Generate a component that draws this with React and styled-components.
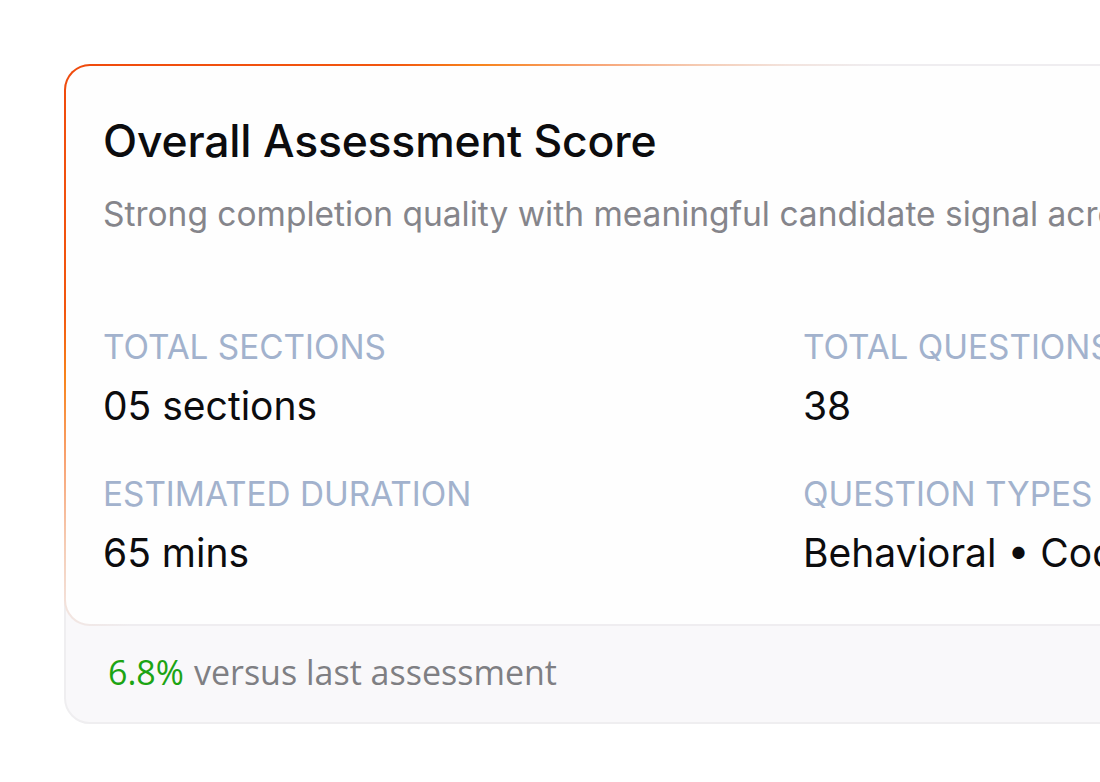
import React from "react";
import styled, { createGlobalStyle } from "styled-components";

const GlobalStyle = createGlobalStyle`
  html, body {
    margin: 0;
    padding: 0;
    overflow: hidden;
    background: #ffffff;
  }
  body {
    font-family: Inter, "Liberation Sans", sans-serif;
  }
`;

const Page = styled.div`
  padding: 64px;
  width: max-content;
`;

const Panel = styled.section`
  box-sizing: border-box;
  width: 1448px;
  background: #f9f8fa;
  border: 2px solid #efeef0;
  border-radius: 26px;
`;

const Card = styled.div`
  padding: 46px 37px 48px;
  border: 2px solid transparent;
  border-radius: 26px;
  margin: -2px -2px 0;
  background:
    linear-gradient(#fefefe, #fefefe) padding-box,
    linear-gradient(
        143deg,
        #f04a0c 0%,
        #f2560f 15%,
        #f7841c 19%,
        #f8a272 24%,
        #f5cbb3 29%,
        #f3e3dd 33%,
        #efedf0 37%,
        #efedf0 100%
      )
      border-box;
`;

const Title = styled.h1`
  margin: 0;
  font-size: 44.5px;
  line-height: 58px;
  font-weight: 500;
  color: #0c0c0e;
  letter-spacing: -0.2px;
`;

const Subtitle = styled.p`
  margin: 22px 0 0;
  font-size: 33.5px;
  line-height: 44px;
  color: #85858b;
  white-space: nowrap;
`;

const Stats = styled.div`
  display: grid;
  grid-template-columns: minmax(0, 1fr) minmax(0, 1fr);
  column-gap: 30px;
  row-gap: 46px;
  margin-top: 92px;
`;

const Stat = styled.div`
  display: flex;
  flex-direction: column;
  gap: 17px;
  white-space: nowrap;
`;

const Label = styled.span`
  font-size: 33.3px;
  line-height: 38px;
  color: #a2b2cd;
  text-transform: uppercase;
`;

const Value = styled.span`
  font-size: 39px;
  line-height: 46px;
  color: #0c0c0e;
`;

const Footer = styled.div`
  height: 96px;
  padding: 0 40px 5px 42px;
  box-sizing: border-box;
  display: flex;
  align-items: center;
  font-family: "Open Sans", "Liberation Sans", sans-serif;
  font-size: 34px;
  color: #7f7f83;
`;

const Delta = styled.span`
  color: ${(props) => (props.up ? "#1ca413" : "#d93025")};
  margin-right: 10px;
`;

const stats = [
  { label: "Total sections", value: "05 sections" },
  { label: "Total questions", value: "38" },
  { label: "Estimated duration", value: "65 mins" },
  { label: "Question types", value: "Behavioral • Coding • System Design" },
];

export default function App() {
  return (
    <>
      <GlobalStyle />
      <Page>
        <Panel>
          <Card>
            <Title>Overall Assessment Score</Title>
            <Subtitle>
              Strong completion quality with meaningful candidate signal across every section.
            </Subtitle>
            <Stats>
              {stats.map((s) => (
                <Stat key={s.label}>
                  <Label>{s.label}</Label>
                  <Value>{s.value}</Value>
                </Stat>
              ))}
            </Stats>
          </Card>
          <Footer>
            <Delta up>6.8%</Delta>
            versus last assessment
          </Footer>
        </Panel>
      </Page>
    </>
  );
}
